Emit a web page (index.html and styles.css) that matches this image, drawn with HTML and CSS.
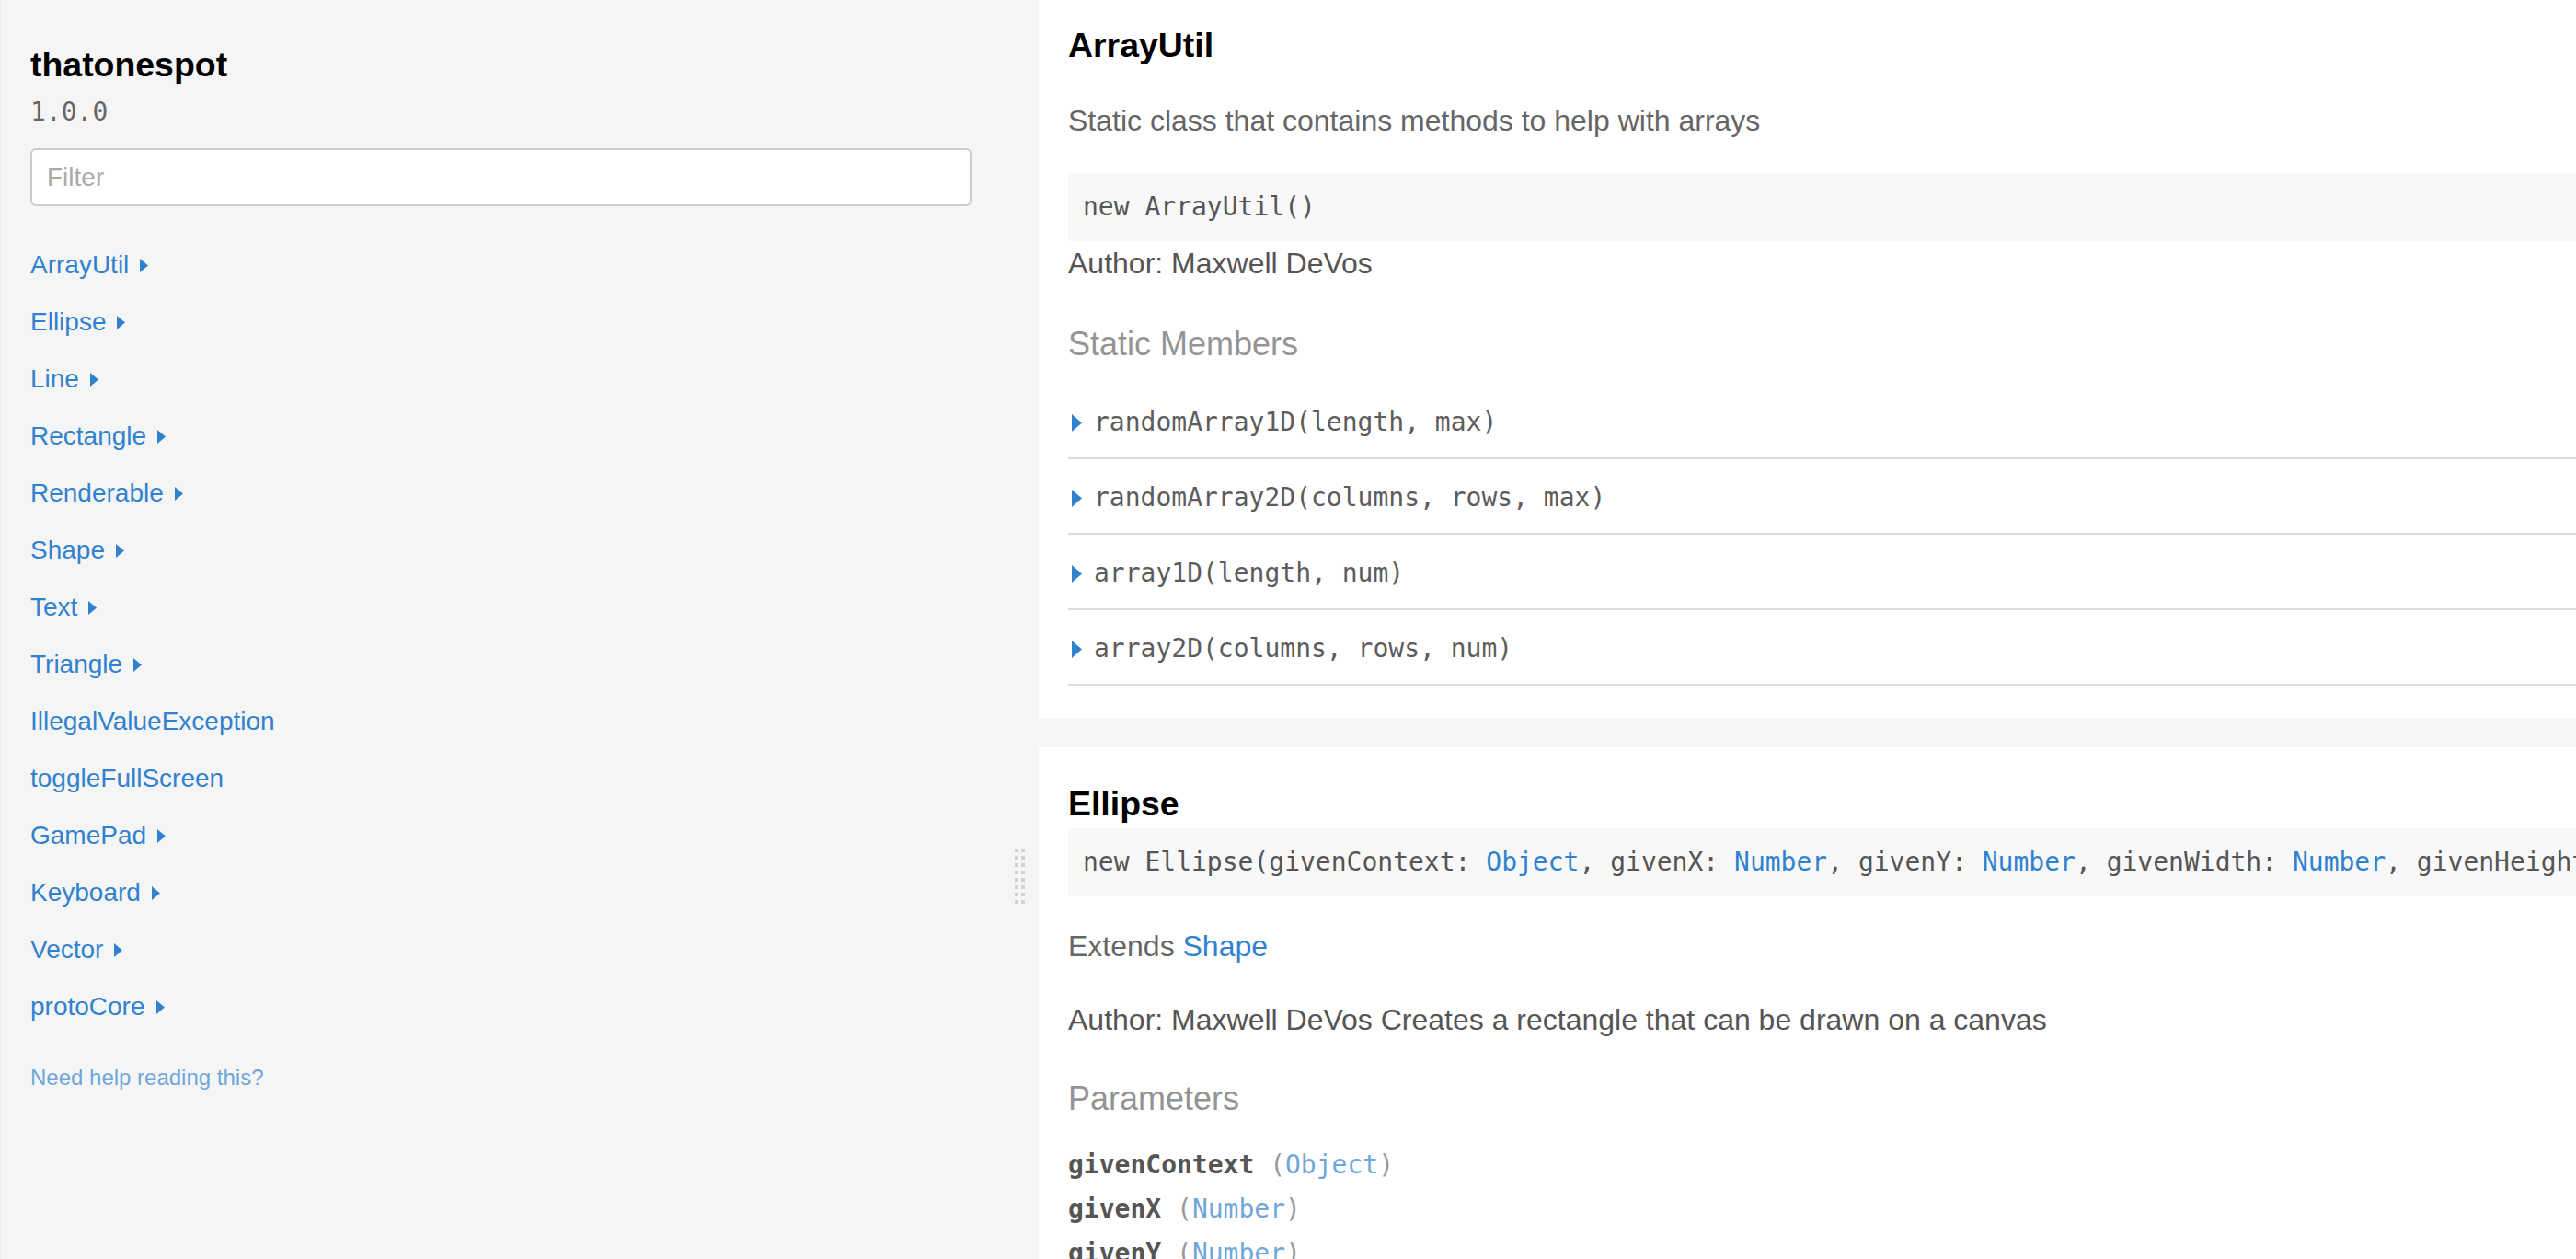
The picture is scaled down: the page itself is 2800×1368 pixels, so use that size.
FILE: index.html
```html
<!DOCTYPE html>
<html lang="en">
<head>
<meta charset="utf-8">
<title>thatonespot 1.0.0 | Documentation</title>
<link rel="stylesheet" href="styles.css">
</head>
<body>
<div class="layout">
  <aside class="sidebar">
    <h3 class="proj">thatonespot</h3>
    <div class="version">1.0.0</div>
    <input class="filter" type="text" placeholder="Filter">
    <ul class="toc">
      <li><a class="toc-link">ArrayUtil<svg class="caret" viewBox="0 0 9 15"><polygon points="0,0 9,7.5 0,15"/></svg></a></li>
      <li><a class="toc-link">Ellipse<svg class="caret" viewBox="0 0 9 15"><polygon points="0,0 9,7.5 0,15"/></svg></a></li>
      <li><a class="toc-link">Line<svg class="caret" viewBox="0 0 9 15"><polygon points="0,0 9,7.5 0,15"/></svg></a></li>
      <li><a class="toc-link">Rectangle<svg class="caret" viewBox="0 0 9 15"><polygon points="0,0 9,7.5 0,15"/></svg></a></li>
      <li><a class="toc-link">Renderable<svg class="caret" viewBox="0 0 9 15"><polygon points="0,0 9,7.5 0,15"/></svg></a></li>
      <li><a class="toc-link">Shape<svg class="caret" viewBox="0 0 9 15"><polygon points="0,0 9,7.5 0,15"/></svg></a></li>
      <li><a class="toc-link">Text<svg class="caret" viewBox="0 0 9 15"><polygon points="0,0 9,7.5 0,15"/></svg></a></li>
      <li><a class="toc-link">Triangle<svg class="caret" viewBox="0 0 9 15"><polygon points="0,0 9,7.5 0,15"/></svg></a></li>
      <li><a class="toc-link">IllegalValueException</a></li>
      <li><a class="toc-link">toggleFullScreen</a></li>
      <li><a class="toc-link">GamePad<svg class="caret" viewBox="0 0 9 15"><polygon points="0,0 9,7.5 0,15"/></svg></a></li>
      <li><a class="toc-link">Keyboard<svg class="caret" viewBox="0 0 9 15"><polygon points="0,0 9,7.5 0,15"/></svg></a></li>
      <li><a class="toc-link">Vector<svg class="caret" viewBox="0 0 9 15"><polygon points="0,0 9,7.5 0,15"/></svg></a></li>
      <li><a class="toc-link">protoCore<svg class="caret" viewBox="0 0 9 15"><polygon points="0,0 9,7.5 0,15"/></svg></a></li>
    </ul>
    <a class="help">Need help reading this?</a>
  </aside>

  <div class="gutter">
    <div class="grip">
      <span></span><span></span><span></span><span></span>
      <span></span><span></span><span></span><span></span>
      <span></span><span></span><span></span><span></span>
      <span></span><span></span><span></span><span></span>
    </div>
  </div>

  <main class="content">
    <section class="card card-first">
      <h3 class="name">ArrayUtil</h3>
      <p class="desc">Static class that contains methods to help with arrays</p>
      <pre class="sig">new ArrayUtil()</pre>
      <p class="author">Author: Maxwell DeVos</p>
      <div class="subhead subhead-members">Static Members</div>
      <div class="members">
        <div class="member"><svg class="mcaret" viewBox="0 0 11 19"><polygon points="0,0 11,9.5 0,19"/></svg><span class="mname">randomArray1D(length, max)</span></div>
        <div class="member"><svg class="mcaret" viewBox="0 0 11 19"><polygon points="0,0 11,9.5 0,19"/></svg><span class="mname">randomArray2D(columns, rows, max)</span></div>
        <div class="member"><svg class="mcaret" viewBox="0 0 11 19"><polygon points="0,0 11,9.5 0,19"/></svg><span class="mname">array1D(length, num)</span></div>
        <div class="member"><svg class="mcaret" viewBox="0 0 11 19"><polygon points="0,0 11,9.5 0,19"/></svg><span class="mname">array2D(columns, rows, num)</span></div>
      </div>
    </section>

    <section class="card card-second">
      <h3 class="name">Ellipse</h3>
      <pre class="sig sig-tight">new Ellipse(givenContext: <a class="type">Object</a>, givenX: <a class="type">Number</a>, givenY: <a class="type">Number</a>, givenWidth: <a class="type">Number</a>, givenHeight: <a class="type">Number</a>)</pre>
      <p class="desc extends">Extends <a class="link">Shape</a></p>
      <p class="author author-gap">Author: Maxwell DeVos Creates a rectangle that can be drawn on a canvas</p>
      <div class="subhead subhead-params">Parameters</div>
      <div class="params">
        <div class="param"><span class="pname">givenContext</span> <span class="ptype">(<a class="ptype-link">Object</a>)</span></div>
        <div class="param"><span class="pname">givenX</span> <span class="ptype">(<a class="ptype-link">Number</a>)</span></div>
        <div class="param"><span class="pname">givenY</span> <span class="ptype">(<a class="ptype-link">Number</a>)</span></div>
        <div class="param"><span class="pname">givenWidth</span> <span class="ptype">(<a class="ptype-link">Number</a>)</span></div>
      </div>
    </section>
  </main>
</div>
</body>
</html>
```

FILE: styles.css
```css
html, body {
  margin: 0;
  padding: 0;
  height: 100%;
  overflow: hidden;
  background: #f5f5f5;
  font-family: "Liberation Sans", Arial, Helvetica, sans-serif;
  color: #666;
}

.layout {
  display: flex;
  height: 100vh;
}

/* ---------- sidebar ---------- */
.sidebar {
  width: 1088px;
  flex-shrink: 0;
  box-sizing: border-box;
  padding: 48px 32px 0 32px;
  background: #f5f5f5;
  border-left: 1px solid #ebebeb;
}

.proj {
  margin: 0;
  font-size: 37.44px;
  line-height: 44px;
  font-weight: bold;
  color: #000;
}

.version {
  margin-top: 10px;
  font-family: "DejaVu Sans Mono", Menlo, monospace;
  font-size: 28px;
  line-height: 40px;
  color: #666;
}

.filter {
  display: block;
  box-sizing: border-box;
  width: 100%;
  height: 63px;
  margin: 19px 0 0 0;
  padding: 0 16px;
  border: 2px solid #ccc;
  border-radius: 6px;
  background: #fff;
  font-family: "Liberation Sans", Arial, sans-serif;
  font-size: 28px;
  color: #333;
  outline: none;
}
.filter::placeholder {
  color: #a9a9a9;
}

.toc {
  list-style: none;
  margin: 33px 0 0 0;
  padding: 0;
}
.toc li {
  padding: 10px 0;
}
.toc-link {
  display: inline-flex;
  align-items: center;
  font-size: 28px;
  line-height: 42px;
  color: #3182ce;
}
.caret {
  width: 9px;
  height: 15px;
  margin-left: 12px;
  fill: #3182ce;
}

.help {
  display: block;
  margin-top: 28px;
  font-size: 24px;
  line-height: 36px;
  color: #6fa7da;
}

/* ---------- gutter ---------- */
.gutter {
  width: 41px;
  flex-shrink: 0;
  background: #f5f5f5;
  display: flex;
  justify-content: center;
  padding-top: 922px;
  box-sizing: border-box;
}
.grip {
  display: grid;
  grid-template-columns: 4px 4px;
  grid-auto-rows: 4px;
  column-gap: 3px;
  row-gap: 4px;
  height: 60px;
}
.grip span {
  background: #d2d2d2;
}

/* ---------- content ---------- */
.content {
  flex: 1;
  min-width: 0;
  overflow: hidden;
  background: #f5f5f5;
}

.card {
  background: #fff;
  padding: 0 0 0 32px;
  margin-bottom: 32px;
}
.card-first {
  padding-top: 27px;
  padding-bottom: 35px;
}
.card-second {
  padding-top: 39px;
  padding-bottom: 40px;
}

.name {
  margin: 0;
  font-size: 37.44px;
  line-height: 44px;
  font-weight: bold;
  color: #000;
}

.desc {
  margin: 36px 0 0 0;
  font-size: 32px;
  line-height: 48px;
  color: #666;
}

.sig {
  margin: 33px 0 0 0;
  padding: 16px;
  background: #f8f8f8;
  font-family: "DejaVu Sans Mono", Menlo, monospace;
  font-size: 28px;
  line-height: 42px;
  color: #555;
  white-space: pre;
  overflow: hidden;
}
.sig-tight {
  margin-top: 5px;
}
.type, .link {
  color: #3182ce;
}

.author {
  margin: 0;
  font-size: 32px;
  line-height: 48px;
  color: #555;
}
.extends {
  margin-top: 30px;
}
.author-gap {
  margin-top: 32px;
}

.subhead {
  font-size: 36px;
  line-height: 60px;
  color: #949494;
}
.subhead-members {
  margin-top: 34px;
}
.subhead-params {
  margin-top: 32px;
}

.members {
  margin-top: 13px;
}
.member {
  display: flex;
  align-items: center;
  padding: 21px 0 17px 4px;
  border-bottom: 2px solid #ddd;
}
.mcaret {
  width: 11px;
  height: 19px;
  fill: #3182ce;
  margin-right: 13px;
  flex-shrink: 0;
}
.mname {
  font-family: "DejaVu Sans Mono", Menlo, monospace;
  font-size: 28px;
  line-height: 42px;
  color: #5c5c5c;
  white-space: pre;
}

.params {
  margin-top: 18px;
}
.param {
  font-family: "DejaVu Sans Mono", Menlo, monospace;
  font-size: 28px;
  line-height: 48px;
  white-space: pre;
}
.pname {
  font-weight: bold;
  color: #555;
}
.ptype {
  color: #999;
}
.ptype-link {
  color: #6fa7da;
}
```
